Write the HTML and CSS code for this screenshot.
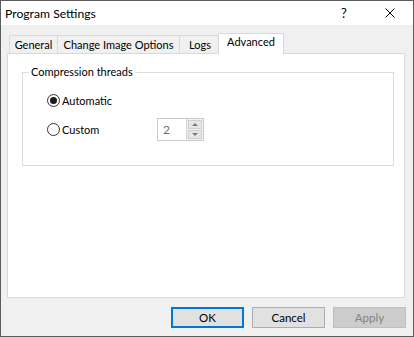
FILE: index.html
```html
<!DOCTYPE html>
<html lang="en">
<head>
    <meta charset="UTF-8">
    <title>Program Settings</title>
    <link rel="stylesheet" href="styles.css">
</head>
<body>
    <div class="window">
        <div class="titlebar">
            <span class="title">Program Settings</span>
            <span class="help">?</span>
            <span class="close">
                <svg width="10" height="10" viewBox="0 0 10 10">
                    <path d="M0.5 0.5 L9.5 9.5 M9.5 0.5 L0.5 9.5" stroke="#000" stroke-width="1" fill="none"/>
                </svg>
            </span>
        </div>
        <div class="dialog-body">
            <div class="tabs">
                <div class="tab tab-general">General</div>
                <div class="tab tab-image">Change Image Options</div>
                <div class="tab tab-logs">Logs</div>
                <div class="tab tab-advanced active">Advanced</div>
            </div>
            <div class="panel">
                <fieldset class="group">
                    <legend>Compression threads</legend>
                    <div class="radio-row">
                        <span class="radio checked"></span>
                        <span>Automatic</span>
                    </div>
                    <div class="radio-row">
                        <span class="radio"></span>
                        <span class="radio-text">Custom</span>
                        <div class="spinner">
                            <span class="spinner-value">2</span>
                            <div class="spin-btns">
                                <span class="spin-btn"><span class="arrow up"></span></span>
                                <span class="spin-btn"><span class="arrow down"></span></span>
                            </div>
                        </div>
                    </div>
                </fieldset>
            </div>
            <div class="buttons">
                <button class="btn default">OK</button>
                <button class="btn">Cancel</button>
                <button class="btn disabled">Apply</button>
            </div>
        </div>
    </div>
</body>
</html>
```

FILE: styles.css
```css
body {
    margin: 0;
    font-family: Lato, "Noto Sans", Arial, sans-serif;
    font-size: 11px;
    color: #000;
}

.window {
    width: 414px;
    height: 337px;
    box-sizing: border-box;
    border: 1px solid #5c5c5c;
    background-color: #f0f0f0;
    display: flex;
    flex-direction: column;
}

.titlebar {
    height: 24px;
    background: white;
    display: flex;
    align-items: center;
    padding-left: 4px;
}

.title {
    flex: 1;
    font-size: 12.2px;
}

.help {
    width: 46px;
    text-align: center;
    font-size: 13px;
}

.close {
    width: 46px;
    display: flex;
    justify-content: center;
}

.dialog-body {
    flex: 1;
    display: flex;
    flex-direction: column;
    padding: 8px 8px 8px 6px;
}

.tabs {
    height: 20px;
    display: flex;
    align-items: flex-end;
    padding-left: 2px;
}

.tab {
    height: 18px;
    box-sizing: border-box;
    border: 1px solid #d9d9d9;
    border-bottom: none;
    margin-right: -1px;
    line-height: 17px;
    text-align: center;
}

.tab-general { width: 49px; }
.tab-image { width: 123px; }
.tab-logs { width: 42px; }

.tab.active {
    width: 66px;
    height: 21px;
    background: white;
    margin: 0 0 -1px -2px;
    line-height: 16px;
    position: relative;
}

.panel {
    height: 245px;
    box-sizing: border-box;
    border: 1px solid #d9d9d9;
    background: white;
    display: flex;
    flex-direction: column;
}

.group {
    margin: 10px 10px 0 14px;
    padding: 9px 0 24px 24px;
    border: 1px solid #dcdcdc;
    display: flex;
    flex-direction: column;
    gap: 6px;
}

.group legend {
    margin-left: -18px;
    padding: 0 2px;
    line-height: 16px;
}

.radio-row {
    height: 23px;
    display: flex;
    align-items: center;
}

.radio {
    width: 13px;
    height: 13px;
    box-sizing: border-box;
    border: 1px solid #333;
    border-radius: 50%;
    margin-right: 2px;
    display: flex;
    align-items: center;
    justify-content: center;
}

.radio.checked::after {
    content: "";
    width: 7px;
    height: 7px;
    border-radius: 50%;
    background: #1a1a1a;
}

.radio-text {
    width: 95px;
}

.spinner {
    width: 47px;
    height: 23px;
    box-sizing: border-box;
    border: 1px solid #cccccc;
    display: flex;
    align-items: center;
}

.spinner-value {
    flex: 1;
    padding-left: 5px;
    color: #6d6d6d;
    font-size: 12px;
}

.spin-btns {
    width: 17px;
    height: 21px;
    box-sizing: border-box;
    border-left: 1px solid #d5d5d5;
    background: #f0f0f0;
    display: flex;
    flex-direction: column;
    gap: 1px;
    padding: 1px;
}

.spin-btn {
    flex: 1;
    background: #e6e6e6;
    border: 1px solid #cfcfcf;
    display: flex;
    align-items: center;
    justify-content: center;
}

.arrow {
    width: 0;
    height: 0;
    border-left: 3px solid transparent;
    border-right: 3px solid transparent;
}

.arrow.up {
    border-bottom: 3px solid #7a7a7a;
}

.arrow.down {
    border-top: 3px solid #7a7a7a;
}

.buttons {
    margin-top: 9px;
    margin-right: -1px;
    display: flex;
    justify-content: flex-end;
    gap: 8px;
}

.btn {
    width: 73px;
    height: 21px;
    box-sizing: border-box;
    border: 1px solid #adadad;
    background: #e1e1e1;
    font-family: Lato, "Noto Sans", Arial, sans-serif;
    font-size: 11.5px;
    color: #000;
    padding: 0;
}

.btn.default {
    border: 2px solid #0078d7;
}

.btn.disabled {
    background: #cccccc;
    border-color: #bfbfbf;
    color: #838383;
}
```
